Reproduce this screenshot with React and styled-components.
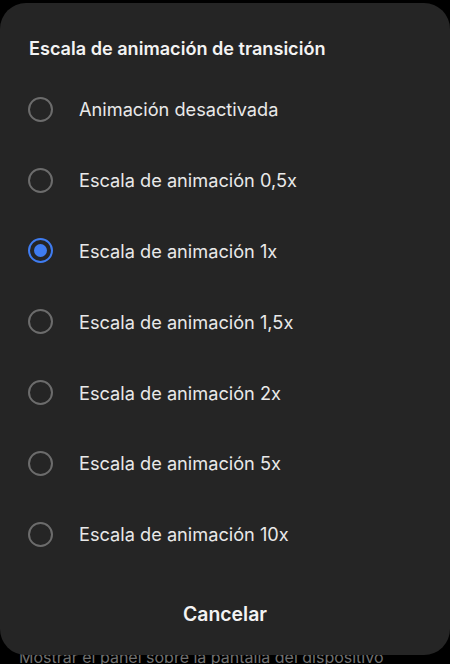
import React from 'react'
import styled, { createGlobalStyle } from 'styled-components'

const Global = createGlobalStyle`
  html, body { margin: 0; padding: 0; background: #000; }
  body { font-family: Inter, Roboto, "Noto Sans", sans-serif; }
`;

const Screen = styled.div`
  width: 450px;
  height: 664px;
  overflow: hidden;
  background: #000;
  padding-top: 3px;
  box-sizing: border-box;
`;

const Sheet = styled.div`
  position: relative;
  z-index: 1;
  height: 652px;
  background: #252525;
  border-radius: 26px;
  display: flex;
  flex-direction: column;
  box-sizing: border-box;
  padding-top: 33px;
`;

const Title = styled.h2`
  margin: 0 0 0 29px;
  font-size: 18.1px;
  font-weight: 600;
  color: #f3f3f3;
  line-height: 24px;
`;

const List = styled.div`
  margin-top: 14px;
  display: flex;
  flex-direction: column;
`;

const Row = styled.div`
  height: 70.8px;
  display: flex;
  align-items: center;
  padding-left: 28px;
`;

const Radio = styled.span`
  width: 25px;
  height: 25px;
  box-sizing: border-box;
  border-radius: 50%;
  border: 2px solid ${p => (p.$on ? '#3f7cf0' : '#6c6c6c')};
  display: flex;
  align-items: center;
  justify-content: center;
  &::after {
    content: '';
    display: ${p => (p.$on ? 'block' : 'none')};
    width: 13px;
    height: 13px;
    border-radius: 50%;
    background: #3f7cf0;
  }
`;

const Label = styled.span`
  margin-left: 26px;
  font-size: 18.2px;
  color: #e9e9e9;
`;

const Cancel = styled.div`
  margin-top: auto;
  margin-bottom: 29px;
  text-align: center;
  font-size: 19.4px;
  font-weight: 600;
  color: #f3f3f3;
`;

const Behind = styled.div`
  margin: -8px 0 0 19px;
  font-size: 16px;
  color: #707070;
  white-space: nowrap;
`;

const options = [
  'Animación desactivada',
  'Escala de animación 0,5x',
  'Escala de animación 1x',
  'Escala de animación 1,5x',
  'Escala de animación 2x',
  'Escala de animación 5x',
  'Escala de animación 10x',
];

const App = () => {
  return (
    <Screen>
      <Global />
      <Sheet>
        <Title>Escala de animación de transición</Title>
        <List>
          {options.map((o, i) => (
            <Row key={o}>
              <Radio $on={i === 2} />
              <Label>{o}</Label>
            </Row>
          ))}
        </List>
        <Cancel>Cancelar</Cancel>
      </Sheet>
      <Behind>Mostrar el panel sobre la pantalla del dispositivo</Behind>
    </Screen>
  )
}

export default App
